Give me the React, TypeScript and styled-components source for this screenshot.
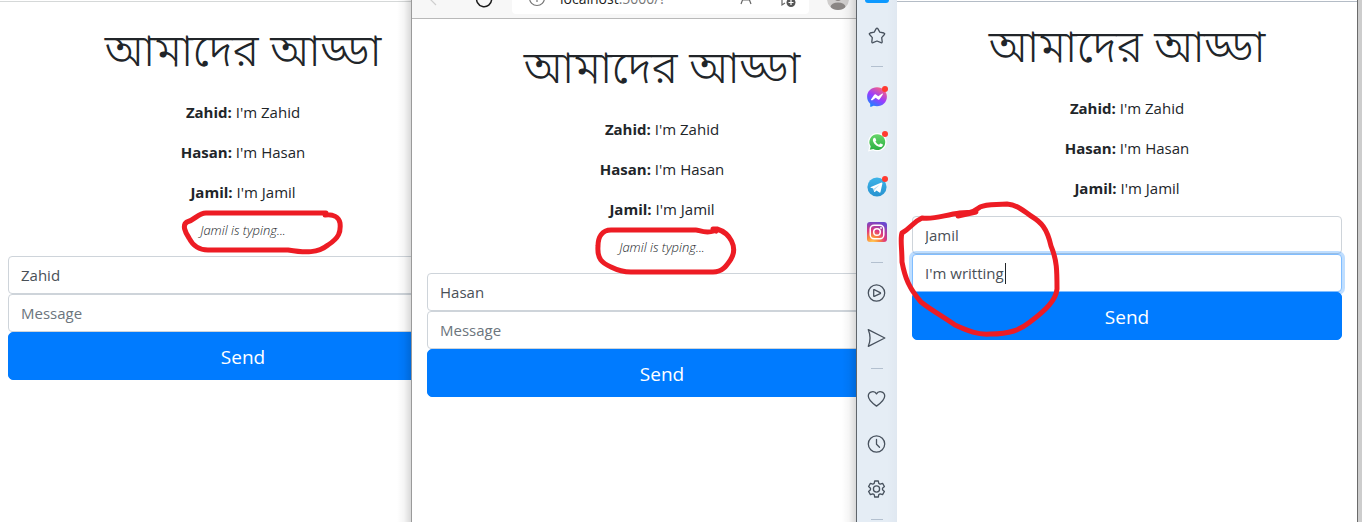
import React from 'react';
import styled, { createGlobalStyle, css } from 'styled-components';

const GlobalStyle = createGlobalStyle`
  *, *::before, *::after { box-sizing: border-box; }
  body {
    margin: 0;
    background: #ffffff;
    color: #212529;
    font-family: 'Open Sans', 'Noto Sans', 'Noto Sans Bengali', sans-serif;
    font-size: 15px;
    line-height: 24px;
  }
`;

const Desktop = styled.div`
  display: grid;
  grid-template-columns: 411fr 445fr 506fr;
  min-height: 100vh;
  overflow: hidden;
`;

const Window = styled.section<{ $edge?: string; $shaded?: boolean }>`
  position: relative;
  display: flex;
  flex-direction: column;
  min-width: 0;
  overflow: hidden;
  background: #ffffff;
  ${(p) => p.$edge && css`border-left: 1px solid ${p.$edge};`}
  ${(p) =>
    p.$shaded &&
    css`
      &::after {
        content: '';
        position: absolute;
        top: 0;
        right: 0;
        bottom: 0;
        width: 14px;
        background: linear-gradient(to right, rgba(0, 0, 0, 0), rgba(0, 0, 0, 0.04) 50%, rgba(0, 0, 0, 0.15));
        pointer-events: none;
      }
    `}
`;

const TopEdge = styled.div<{ $color: string }>`
  flex: none;
  height: 2px;
  border-bottom: 1px solid ${(p) => p.$color};
`;

const Toolbar = styled.header`
  display: flex;
  align-items: flex-end;
  flex: none;
  height: 19px;
  overflow: hidden;
  background: #f7f7f7;
  border-bottom: 1px solid #b9b9b9;
`;

const ToolbarRow = styled.div`
  display: flex;
  align-items: center;
  flex: 1;
  min-width: 0;
  height: 38px;
  padding: 0 7px 0 16px;
`;

const ToolButton = styled.button<{ $gap?: number }>`
  display: flex;
  flex: none;
  margin: 0 ${(p) => p.$gap ?? 0}px 0 0;
  padding: 0;
  border: 0;
  background: none;
`;

const AddressBar = styled.div`
  display: flex;
  align-items: center;
  flex: 1;
  min-width: 0;
  height: 30px;
  margin-right: 18px;
  padding: 0 12px 0 16px;
  border-radius: 4px;
  background: #ffffff;
`;

const Address = styled.span`
  flex: 1;
  margin-left: 14px;
  color: #767676;
  font-size: 14px;
  line-height: 20px;
  b { color: #1b1b1b; font-weight: 400; }
`;

const Page = styled.main<{ $top: number; $side: number; $wide?: boolean }>`
  flex: 1;
  min-width: ${(p) => (p.$wide ? 470 + 2 * p.$side : 0)}px;
  padding: ${(p) => p.$top}px ${(p) => p.$side}px 0;
  text-align: center;
`;

const Title = styled.h1`
  margin: 0 0 24px;
  font-family: 'Noto Sans Bengali', 'Noto Sans', sans-serif;
  font-size: 45px;
  font-weight: 300;
  line-height: 42px;
`;

const Message = styled.p`
  margin: 0 0 16px;
`;

const Typing = styled.div`
  position: relative;
  height: 36px;
  font-size: 13px;
  font-style: italic;
  font-weight: 300;
  line-height: 20px;
`;

const Scribble = styled.svg`
  position: absolute;
  overflow: visible;
  pointer-events: none;
  z-index: 2;
  fill: none;
  stroke: #ed1c24;
  stroke-linecap: round;
  stroke-linejoin: round;
`;

const NoteScribble = styled(Scribble)<{ $shift: number }>`
  left: calc(50% - ${(p) => p.$shift}px);
  top: -10px;
`;

const FormScribble = styled(Scribble)`
  left: -12px;
  top: -12px;
`;

const Form = styled.form`
  position: relative;
  display: flex;
  flex-direction: column;
  margin: 0;
`;

const Field = styled.div`
  position: relative;
  display: flex;
`;

const Input = styled.input<{ $active?: boolean }>`
  flex: 1;
  min-width: 0;
  height: 38px;
  padding: 6px 12px;
  border: 1px solid #ced4da;
  border-radius: 4px;
  outline: 0;
  background: #ffffff;
  color: #495057;
  font: inherit;
  &::placeholder { color: #6c757d; opacity: 1; }
  ${(p) =>
    p.$active &&
    css`
      border-color: #80bdff;
      box-shadow: 0 0 0 3px rgba(0, 123, 255, 0.25);
    `}
`;

const Caret = styled.span`
  position: absolute;
  left: 93px;
  top: 9px;
  width: 1px;
  height: 21px;
  background: #212529;
`;

const SendButton = styled.button`
  position: relative;
  height: 48px;
  padding: 2px 16px 0;
  border: 1px solid #007bff;
  border-radius: 5px;
  background: #007bff;
  color: #ffffff;
  font: inherit;
  font-size: 19px;
`;

const Split = styled.div`
  display: flex;
  flex: 1;
`;

const Sidebar = styled.nav`
  display: flex;
  flex-direction: column;
  align-items: center;
  flex: none;
  width: 40px;
  max-height: 100vh;
  overflow: hidden;
  background: linear-gradient(to right, #e5edf5 75%, #e0e8f1);
`;

const ActiveTab = styled.div`
  flex: none;
  width: 24px;
  height: 3px;
  margin-bottom: 10px;
  border-radius: 0 0 3px 3px;
  background: #0d99ff;
`;

const SideButton = styled.button`
  position: relative;
  display: flex;
  align-items: center;
  justify-content: center;
  flex: none;
  width: 40px;
  height: 45px;
  padding: 0;
  border: 0;
  background: none;
  color: #47515d;
`;

const Badge = styled.span`
  position: absolute;
  top: 12px;
  right: 9px;
  width: 6px;
  height: 6px;
  border-radius: 50%;
  background: #ff3b30;
`;

const Divider = styled.hr`
  flex: none;
  width: 12px;
  height: 1px;
  margin: 8px 0 7px;
  border: 0;
  background: #b3c0cf;
`;

const Browser = styled.div`
  display: flex;
  flex-direction: column;
  flex: 1;
  min-width: 0;
`;

const OuterEdge = styled.div`
  flex: none;
  width: 5px;
  border-left: 1px solid #6b6b6b;
  background: #cdcdcd;
`;

const LineIcon = ({ children }: { children: React.ReactNode }) => (
  <svg width="20" height="20" viewBox="0 0 20 20" fill="none" stroke="currentColor" strokeWidth="1.3" strokeLinejoin="round" strokeLinecap="round">
    {children}
  </svg>
);

const StarIcon = () => (
  <LineIcon>
    <path d="M9.2 2.7q.8-1.2 1.6 0l2 3.400 4.100.9q1.300.4.5 1.500l-2.700 3.100.5 4.200q0 1.300-1.200.9L10 15l-4 1.700q-1.200.4-1.200-.9l.5-4.200-2.700-3.100Q1.800 7.400 3.100 7l4.100-.9z" />
  </LineIcon>
);

const MessengerIcon = () => (
  <svg width="20" height="20" viewBox="0 0 20 20">
    <defs>
      <linearGradient id="messenger" x1="0.15" y1="1" x2="0.75" y2="0">
        <stop offset="0" stopColor="#0a8cff" />
        <stop offset="0.5" stopColor="#9a3cff" />
        <stop offset="1" stopColor="#ff6478" />
      </linearGradient>
    </defs>
    <path fill="url(#messenger)" d="M10 .2C4.400.2.1 4.200.1 9.800c0 2.800 1.200 5.300 3.100 7v2.500c0 .6.500.8 1 .5l2.400-1.100c1 .3 2.200.5 3.400.5 5.600 0 9.900-3.900 9.900-9.400S15.600.2 10 .2z" />
    <path fill="#fff" d="M4 12.600l3.200-4.800c.4-.6 1.200-.7 1.700-.3l2.400 1.700 3.600-2.500c.6-.4 1.300.2.9.8l-3 4.600c-.4.600-1.200.8-1.800.3L8.700 10.700 5 13.400c-.600.4-1.300-.2-1-.8z" />
  </svg>
);

const WhatsAppIcon = () => (
  <svg width="20" height="20" viewBox="0 0 20 20">
    <defs>
      <linearGradient id="whatsapp" x1="0" y1="0" x2="0" y2="1">
        <stop offset="0" stopColor="#67d66b" />
        <stop offset="1" stopColor="#2bb043" />
      </linearGradient>
    </defs>
    <path fill="#fff" d="M10.300.9A9.200 9.200 0 0 0 2.400 14.700L1 19.500l5-1.300A9.200 9.200 0 1 0 10.300.9z" />
    <path fill="url(#whatsapp)" d="M10.300 2.200a7.900 7.900 0 0 0-6.600 12.200l-.9 3.400 3.500-.9a7.900 7.900 0 1 0 4-14.700z" />
    <path fill="#fff" d="M7.700 5.800c.3 0 .5 0 .7.500l.8 1.800c.1.300 0 .5-.8 1.500.9 1.600 2 2.500 3.700 3.200l1-1.200c.2-.2.400-.3.700-.1l1.700.8c.4.200.5.300.4.800-.2 1.400-1.500 2.100-2.700 2-3.200-.4-6.700-3.400-7.300-6.600-.2-1.300.7-2.700 1.800-2.700z" />
  </svg>
);

const TelegramIcon = () => (
  <svg width="20" height="20" viewBox="0 0 20 20">
    <defs>
      <linearGradient id="telegram" x1="0" y1="0" x2="0" y2="1">
        <stop offset="0" stopColor="#3eb4e8" />
        <stop offset="1" stopColor="#2792d0" />
      </linearGradient>
    </defs>
    <circle cx="10" cy="10" r="9.600" fill="url(#telegram)" />
    <path fill="#fff" d="M3.900 9.900l10.600-4.300c.6-.2 1 .1.900.8l-1.900 8.700c-.1.600-.6.700-1.100.4l-2.900-2.100-1.600 1.500c-.4.400-.7.200-.8-.2l-.9-3.100-2.300-.8c-.6-.2-.6-.6 0-.9z" />
    <path fill="#b6d8ec" d="M7 11.500l5.800-3.700-4.600 4.500-.3 2.400z" />
  </svg>
);

const InstagramIcon = () => (
  <svg width="20" height="20" viewBox="0 0 20 20" fill="none">
    <defs>
      <radialGradient id="instagram" cx="0.28" cy="1.05" r="1.1">
        <stop offset="0" stopColor="#ffd65c" />
        <stop offset="0.3" stopColor="#fb8b3c" />
        <stop offset="0.58" stopColor="#e0387c" />
        <stop offset="1" stopColor="#6a48cf" />
      </radialGradient>
    </defs>
    <rect width="20" height="20" rx="3" fill="url(#instagram)" />
    <rect x="3.200" y="3.200" width="13.600" height="13.600" rx="4" stroke="#fff" strokeWidth="1.500" />
    <circle cx="10" cy="10" r="3.300" stroke="#fff" strokeWidth="1.500" />
    <circle cx="14" cy="6" r="0.900" fill="#fff" />
  </svg>
);

const PlayIcon = () => (
  <LineIcon>
    <circle cx="9.500" cy="10" r="8.200" />
    <path d="M6.700 7v6q0 .5.500.4l6-2.700q.6-.6 0-1.100l-6-3q-.5-.2-.5.400z" />
  </LineIcon>
);

const PlaneIcon = () => (
  <LineIcon>
    <path d="M1.300 1.700L17.800 10 1.300 18.300q3.500-8.300 0-16.600z" />
  </LineIcon>
);

const HeartIcon = () => (
  <LineIcon>
    <path d="M9.500 17.100C5.500 14.400 1.300 11.100 1.300 7.100c0-5 6.500-5.700 8.200-2.200 1.700-3.500 8.200-2.800 8.200 2.200 0 4-4.200 7.300-8.200 10z" />
  </LineIcon>
);

const ClockIcon = () => (
  <LineIcon>
    <circle cx="9.500" cy="10" r="8.200" />
    <path d="M9.500 5.500v4.800l3 3" />
  </LineIcon>
);

const GearIcon = () => (
  <LineIcon>
    <circle cx="9.500" cy="10" r="3.100" />
    <path d="M7.700 2h3.600l.5 2.400 1.400.8 2.400-.8 1.800 3.100-1.900 1.700v1.600l1.900 1.700-1.800 3.100-2.400-.8-1.400.8-.5 2.400H7.700l-.5-2.400-1.400-.8-2.400.8L1.600 12.500l1.900-1.700V9.200L1.600 7.500l1.800-3.100 2.400.8 1.400-.8z" />
  </LineIcon>
);

const messages = ['Zahid', 'Hasan', 'Jamil'];

interface ChatProps {
  user: string;
  top: number;
  side: number;
  wide?: boolean;
  draft?: string;
  scribble: React.ReactNode;
}

function Chat({ user, top, side, wide, draft, scribble }: ChatProps) {
  return (
    <Page $top={top} $side={side} $wide={wide}>
      <Title lang="bn">আমাদের আড্ডা</Title>
      {messages.map((name) => (
        <Message key={name}>
          <strong>{name}:</strong> I'm {name}
        </Message>
      ))}
      {!draft && (
        <Typing>
          Jamil is typing...
          {scribble}
        </Typing>
      )}
      <Form onSubmit={(e) => e.preventDefault()}>
        <Field>
          <Input aria-label="Name" defaultValue={user} />
        </Field>
        <Field>
          <Input aria-label="Message" placeholder="Message" defaultValue={draft} $active={!!draft} />
          {draft && <Caret />}
        </Field>
        <SendButton type="submit">Send</SendButton>
        {draft && scribble}
      </Form>
    </Page>
  );
}

export default function App() {
  return (
    <>
      <GlobalStyle />
      <Desktop>
        <Window $shaded>
          <TopEdge $color="#d5d8d8" />
          <Chat
            user="Zahid"
            top={32}
            side={8}
            wide
            scribble={
              <NoteScribble $shift={61} width="162" height="46" strokeWidth="5">
                <path d="M144 3H24C16 3 13 10 5 12C0 15 3 22 7 28C11 36 17 40 26 40H106C124 43 136 43 146 35C157 28 159 22 158 13C157 7 151 4 143 5" />
              </NoteScribble>
            }
          />
        </Window>

        <Window $edge="#9a9a9a" $shaded>
          <Toolbar>
            <ToolbarRow>
              <ToolButton aria-label="Back" $gap={27}>
                <svg width="18" height="18" fill="none" stroke="#cfcfcf" strokeWidth="1.200"><path d="M8 2L2 9l6 6" /></svg>
              </ToolButton>
              <ToolButton aria-label="Refresh" $gap={19}>
                <svg width="20" height="20" fill="none" stroke="#1b1b1b" strokeWidth="1.500"><path d="M16 4.500A7.500 7.500 0 1 1 9 3M16 1v4h-4" /></svg>
              </ToolButton>
              <AddressBar>
                <svg width="18" height="18" fill="none" stroke="#767676" strokeWidth="1.200"><circle cx="9" cy="8" r="7.500" /><path d="M9 7v5M9 4v1" /></svg>
                <Address><b>localhost</b>:5000/?</Address>
                <ToolButton aria-label="Read aloud" $gap={26}>
                  <svg width="14" height="18" fill="none" stroke="#666" strokeWidth="1.200"><path d="M2 14L7 1l5 13M4 10h6" /></svg>
                </ToolButton>
                <ToolButton aria-label="Add to favorites">
                  <svg width="18" height="18" fill="none" stroke="#666" strokeWidth="1.200">
                    <path d="M6 13L3 15V8L1 5h5l2-4 2 4h5" />
                    <circle cx="12" cy="12.500" r="4.500" fill="#555" stroke="none" />
                    <path stroke="#fff" d="M12 10v5M9.500 12.500h5" />
                  </svg>
                </ToolButton>
              </AddressBar>
              <ToolButton aria-label="Profile">
                <svg width="22" height="22" viewBox="0 0 22 22">
                  <defs><clipPath id="avatar"><circle cx="11" cy="11" r="11" /></clipPath></defs>
                  <g clipPath="url(#avatar)">
                    <rect width="22" height="22" fill="#d0cecd" />
                    <circle cx="11" cy="8.500" r="4.500" fill="#8a8684" />
                    <ellipse cx="11" cy="19" rx="7.500" ry="4.500" fill="#8a8684" />
                  </g>
                </svg>
              </ToolButton>
            </ToolbarRow>
          </Toolbar>
          <Chat
            user="Hasan"
            top={32}
            side={15}
            wide
            scribble={
              <NoteScribble $shift={81} width="140" height="48" strokeWidth="5">
                <path d="M133 4C124 7 118 3 115 3H30C21 3 17 10 17 19C16 32 21 36 30 40C38 44 44 45 50 45H132C142 45 146 38 150 32C157 20 149 6 136 2H132L135 4" />
              </NoteScribble>
            }
          />
        </Window>

        <Window $edge="#5f656b">
          <Split>
            <Sidebar aria-label="Sidebar">
              <ActiveTab />
              <SideButton aria-label="Bookmarks"><StarIcon /></SideButton>
              <Divider />
              <SideButton aria-label="Messenger"><MessengerIcon /><Badge /></SideButton>
              <SideButton aria-label="WhatsApp"><WhatsAppIcon /><Badge /></SideButton>
              <SideButton aria-label="Telegram"><TelegramIcon /><Badge /></SideButton>
              <SideButton aria-label="Instagram"><InstagramIcon /></SideButton>
              <Divider />
              <SideButton aria-label="Player"><PlayIcon /></SideButton>
              <SideButton aria-label="Flow"><PlaneIcon /></SideButton>
              <Divider />
              <SideButton aria-label="Favorites"><HeartIcon /></SideButton>
              <SideButton aria-label="History"><ClockIcon /></SideButton>
              <SideButton aria-label="Settings"><GearIcon /></SideButton>
              <Divider />
            </Sidebar>
            <Browser>
              <TopEdge $color="#b4bcc6" />
              <Chat
                user="Jamil"
                draft="I'm writting"
                top={28}
                side={15}
                scribble={
                  <FormScribble width="162" height="134" strokeWidth="5">
                    <path d="M59 9L76 8L58 12M60 9C44 11 34 16 22 14C13 18 12 23 2 29C0 34 2 44 2 58C5 74 9 84 21 98C31 106 42 112 55 121C68 127 78 131 90 130C110 130 120 126 130 118C146 106 156 96 157 85C157 67 157 56 151 42C147 24 141 18 131 12C120 4 116 1 107 0C94 1 87 0 80 3C76 6 74 8 68 9" />
                  </FormScribble>
                }
              />
            </Browser>
            <OuterEdge />
          </Split>
        </Window>
      </Desktop>
    </>
  );
}
